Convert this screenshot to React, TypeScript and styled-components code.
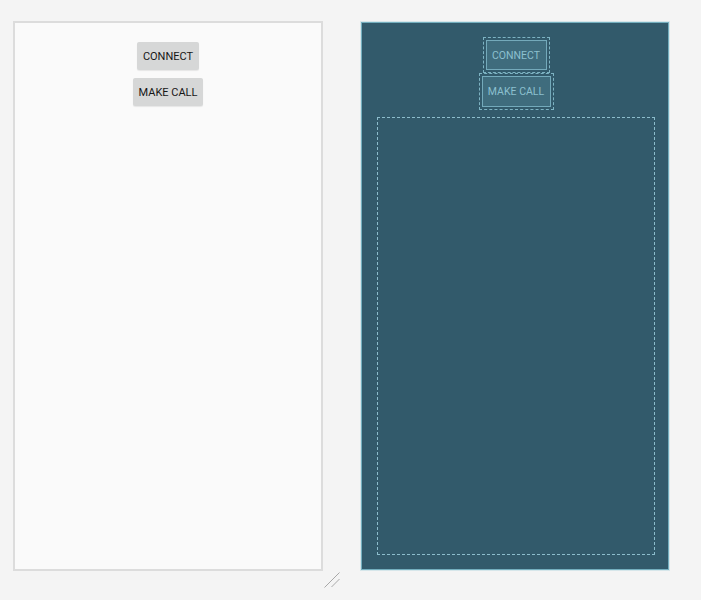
import React from "react";
import styled, { createGlobalStyle } from "styled-components";

const GlobalStyle = createGlobalStyle`
  html, body {
    margin: 0;
    padding: 0;
    background: #f4f4f4;
    font-family: Roboto, "Liberation Sans", sans-serif;
  }
`;

const Canvas = styled.div`
  display: flex;
  align-items: flex-start;
  gap: 38px;
  padding: 21px 0 0 13px;
  height: 600px;
  box-sizing: border-box;
`;

const Column = styled.div`
  display: flex;
  flex-direction: column;
`;

const DesignPanel = styled.div`
  width: 310px;
  height: 550px;
  box-sizing: border-box;
  background: #fafafa;
  border: 2px solid #dcdcdc;
  display: flex;
  flex-direction: column;
  align-items: center;
  gap: 8px;
  padding-top: 19px;
`;

const Button = styled.div`
  height: 28px;
  padding: 0 6px;
  display: flex;
  align-items: center;
  justify-content: center;
  background: #d6d7d7;
  border-radius: 2px;
  box-shadow: 0 1px 1px rgba(0, 0, 0, 0.08);
  color: #161616;
  font-size: 11px;
  font-weight: 400;
`;

const Handle = styled.svg`
  align-self: flex-end;
  margin-right: -17px;
  margin-top: 1px;
`;

const BlueprintPanel = styled.div`
  width: 308px;
  height: 548px;
  margin-top: 1px;
  box-sizing: border-box;
  background: #325a6b;
  border: 1px solid #73aebe;
  box-shadow: 0 0 0 1px #d6e6ea;
  display: flex;
  flex-direction: column;
  align-items: center;
  padding: 14px 13px 14px 15px;
`;

const Outline = styled.div<{ $w: number; $h: number }>`
  width: ${p => p.$w}px;
  height: ${p => p.$h}px;
  box-sizing: border-box;
  border: 1px dashed #7db3c3;
  padding: 2px;
  display: flex;
`;

const Ghost = styled.div`
  flex: 1;
  border: 1px solid #74aabb;
  background: #3f6c7d;
  display: flex;
  align-items: center;
  justify-content: center;
  color: #8cc0cf;
  font-size: 10.5px;
  font-weight: 400;
`;

const Frame = styled.div`
  align-self: stretch;
  flex: 1;
  margin-top: 7px;
  border: 1px dashed #8cbdcc;
`;

export default function App() {
  return (
    <>
      <GlobalStyle />
      <Canvas>
        <Column>
          <DesignPanel>
            <Button>CONNECT</Button>
            <Button>MAKE CALL</Button>
          </DesignPanel>
          <Handle width="16" height="16" viewBox="0 0 16 16">
            <line x1="0.5" y1="15.5" x2="15.5" y2="0.5" stroke="#a8a8a8" strokeWidth="1" />
            <line x1="7.5" y1="15" x2="15.5" y2="7" stroke="#a8a8a8" strokeWidth="1" />
          </Handle>
        </Column>
        <BlueprintPanel>
          <Outline $w={67} $h={36}>
            <Ghost>CONNECT</Ghost>
          </Outline>
          <Outline $w={75} $h={37}>
            <Ghost>MAKE CALL</Ghost>
          </Outline>
          <Frame />
        </BlueprintPanel>
      </Canvas>
    </>
  );
}
